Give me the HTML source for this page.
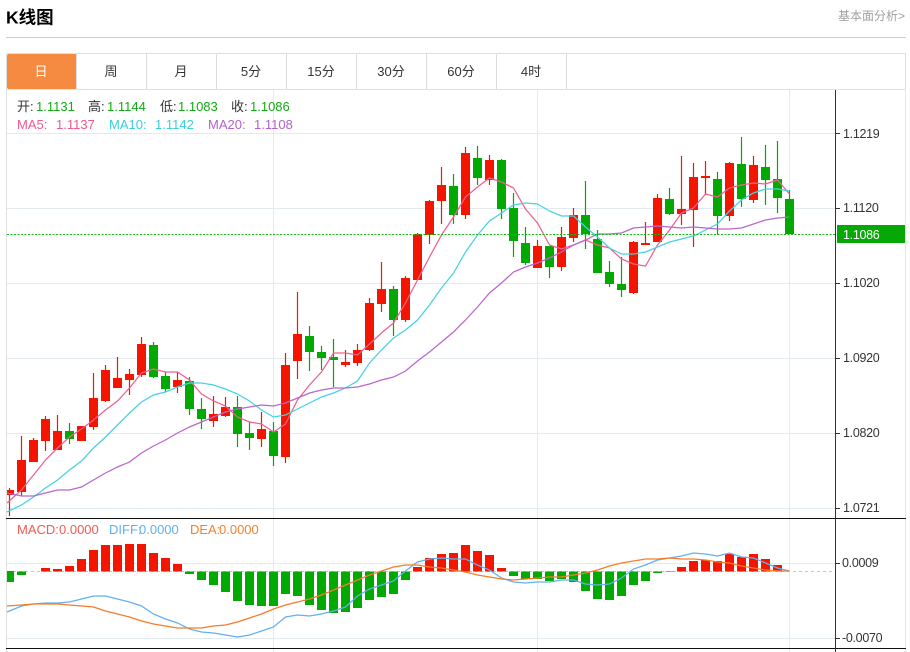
<!DOCTYPE html>
<html lang="zh">
<head>
<meta charset="utf-8">
<title>K线图</title>
<style>
html,body{margin:0;padding:0;background:#fff;}
body{width:910px;height:652px;overflow:hidden;position:relative;font-family:"Liberation Sans","Noto Sans CJK SC",sans-serif;}
svg{position:absolute;left:0;top:0;}
text{font-family:"Liberation Sans","Noto Sans CJK SC",sans-serif;}
</style>
</head>
<body>
<svg width="910" height="652" viewBox="0 0 910 652" xmlns="http://www.w3.org/2000/svg">
<defs><clipPath id="c"><rect x="7" y="90" width="828" height="428"/></clipPath></defs>
<text x="6" y="23.5" font-size="17.5" font-weight="700" fill="#000">K线图</text>
<text x="838" y="20" font-size="12" fill="#a0a0a0">基本面分析&gt;</text>
<rect x="6" y="37" width="900" height="1" fill="#cfcfcf"/>

<!-- frame -->
<path d="M6.5 53.5H905.5V89.5M6.5 53.5V652" fill="none" stroke="#dddfe1"/>
<path d="M905.5 89.5V652" fill="none" stroke="#e3e8ee"/>
<path d="M7 89.5H905" stroke="#dfe3e6"/>
<path d="M76.5 54V89M146.5 54V89M216.5 54V89M286.5 54V89M356.5 54V89M426.5 54V89M496.5 54V89M566.5 54V89" stroke="#dcdcdc"/>
<path d="M9 54H76V89H9Q7 89 7 87V56Q7 54 9 54Z" fill="#f48b40"/>
<g font-size="13" text-anchor="middle" fill="#333">
<text x="41" y="76" fill="#fff">日</text>
<text x="111" y="76">周</text>
<text x="181" y="76">月</text>
<text x="251" y="76">5分</text>
<text x="321" y="76">15分</text>
<text x="391" y="76">30分</text>
<text x="461" y="76">60分</text>
<text x="531" y="76">4时</text>
</g>

<!-- grid -->
<path d="M7 133.5H835M7 208.5H835M7 283.5H835M7 358.5H835M7 433.5H835M7 508.5H835M7 563.5H835M7 638.5H835M273.5 90V652M537.5 90V652M789.5 90V652" stroke="#e3ebf1" fill="none"/>

<!-- candles -->
<g clip-path="url(#c)">
<path stroke="#f41500" stroke-width="1.2" fill="none" d="M9.5 488V516M21.5 436V496M33.5 438V462M45.5 416V451M57.5 415V450M81.5 426V441M93.5 373V430M105.5 365V402M117.5 357V388M129.5 369V395M141.5 337V377M177.5 372V393M213.5 396V427M225.5 397V417M261.5 412V447M285.5 353V463M297.5 292V379M345.5 350V367M357.5 344V366M369.5 298V351M381.5 262V312M405.5 276V322M417.5 233V280M429.5 200V244M441.5 167V224M465.5 147V219M489.5 155V185M537.5 240V268M561.5 227V271M573.5 208V242M633.5 241V294M645.5 222V245M657.5 194V242M681.5 156V225M693.5 163V247M705.5 161V195M729.5 162V221M753.5 156V203"/>
<path stroke="#02a902" stroke-width="1.2" fill="none" d="M69.5 423V444M153.5 342V378M165.5 372V392M189.5 377V415M201.5 398V429M237.5 396V447M249.5 422V450M273.5 422V466M309.5 326V371M321.5 346V370M333.5 339V387M393.5 286V336M453.5 174V224M477.5 146V185M501.5 159V219M513.5 193V257M525.5 227V265M549.5 246V278M585.5 181V249M597.5 230V273M609.5 261V287M621.5 257V297M669.5 188V215M717.5 172V235M741.5 137V207M765.5 145V205M777.5 141V213M789.5 190V234"/>
<path stroke="#f41500" stroke-width="9" fill="none" d="M9.5 490V495M21.5 460V492M33.5 440V462M45.5 419V441M57.5 431V450M81.5 426V441M93.5 398V427M105.5 370V401M117.5 378V388M129.5 374V380M141.5 344V375M177.5 380V387M213.5 414V421M225.5 407V416M261.5 429V439M285.5 365V457M297.5 334V361M345.5 362V365M357.5 350V363M369.5 303V350M381.5 289V304M405.5 278V320M417.5 234V280M429.5 201V235M441.5 185V201M465.5 153V215M489.5 160V180M537.5 246V268M561.5 237V267M573.5 215V238M633.5 242V293M645.5 243V245M657.5 198V242M681.5 209V214M693.5 177V210M705.5 176V178M729.5 163V216M753.5 165V200"/>
<path stroke="#02a902" stroke-width="9" fill="none" d="M69.5 431V439M153.5 345V377M165.5 376V389M189.5 381V409M201.5 409V419M237.5 407V434M249.5 433V438M273.5 431V456M309.5 336V352M321.5 352V358M333.5 357V360M393.5 289V320M453.5 186V215M477.5 158V178M501.5 160V209M513.5 208V241M525.5 243V263M549.5 246V267M585.5 215V234M597.5 239V273M609.5 272V284M621.5 284V290M669.5 199V214M717.5 179V216M741.5 164V199M765.5 167V180M777.5 179V198M789.5 199V234"/>
<polyline fill="none" stroke="#f0608f" stroke-width="1.25" points="7,503 21.5,490 33.5,475 45.5,460 57.5,448 69.5,437 81.5,429 93.5,420 105.5,410 117.5,401 129.5,388 141.5,373 153.5,369 165.5,372 177.5,372 189.5,380 201.5,394 213.5,401 225.5,406 237.5,417 249.5,422 261.5,424 273.5,432 285.5,424 297.5,400 309.5,385 321.5,372 333.5,353 345.5,353 357.5,355 369.5,344 381.5,333 393.5,323 405.5,303 417.5,280 429.5,257 441.5,235 453.5,217 465.5,197 477.5,187 489.5,178 501.5,182 513.5,188 525.5,209 537.5,223 549.5,245 561.5,249 573.5,245 585.5,240 597.5,245 609.5,248 621.5,259 633.5,264 645.5,266 657.5,245 669.5,230 681.5,213 693.5,208 705.5,194 717.5,197 729.5,188 741.5,185 753.5,183 765.5,184 777.5,180 789.5,194"/>
<polyline fill="none" stroke="#45d2e2" stroke-width="1.25" points="7,512 21.5,505 33.5,497 45.5,488 57.5,480 69.5,470 81.5,461 93.5,448 105.5,437 117.5,425 129.5,413 141.5,402 153.5,395 165.5,392 177.5,387 189.5,383 201.5,383 213.5,385 225.5,389 237.5,394 249.5,401 261.5,410 273.5,417 285.5,415 297.5,409 309.5,403 321.5,397 333.5,393 345.5,388 357.5,381 369.5,363 381.5,350 393.5,338 405.5,330 417.5,320 429.5,305 441.5,288 453.5,273 465.5,252 477.5,235 489.5,221 501.5,213 513.5,205 525.5,203 537.5,204 549.5,211 561.5,216 573.5,216 585.5,227 597.5,237 609.5,248 621.5,254 633.5,254 645.5,252 657.5,247 669.5,242 681.5,239 693.5,236 705.5,230 717.5,224 729.5,211 741.5,200 753.5,193 765.5,189 777.5,189 789.5,191"/>
<polyline fill="none" stroke="#b966ce" stroke-width="1.25" points="7,493 21.5,496 33.5,496 45.5,493 57.5,490 69.5,490 81.5,487 93.5,480 105.5,473 117.5,467 129.5,462 141.5,453 153.5,446 165.5,440 177.5,433 189.5,427 201.5,422 213.5,417 225.5,412 237.5,409 249.5,407 261.5,405 273.5,406 285.5,403 297.5,398 309.5,393 321.5,390 333.5,388 345.5,388 357.5,387 369.5,384 381.5,380 393.5,377 405.5,371 417.5,361 429.5,352 441.5,342 453.5,332 465.5,320 477.5,307 489.5,293 501.5,283 513.5,272 525.5,267 537.5,263 549.5,258 561.5,252 573.5,245 585.5,240 597.5,234 609.5,234 621.5,233 633.5,228 645.5,227 657.5,226 669.5,227 681.5,228 693.5,227 705.5,228 717.5,229 729.5,229 741.5,228 753.5,224 765.5,220 777.5,218 789.5,217"/>
</g>
<path d="M7 234.5H835" stroke="#12b812" stroke-width="1" stroke-dasharray="2 1.5"/>

<!-- macd -->
<path d="M7 571.5H833" stroke="#a4d3e4" stroke-dasharray="3 3"/>
<path stroke="#f41500" stroke-width="9" fill="none" d="M45.5 568V571.5M57.5 569V571.5M69.5 566V571.5M81.5 559V571.5M93.5 550V571.5M105.5 545V571.5M117.5 545V571.5M129.5 544V571.5M141.5 544V571.5M153.5 553V571.5M165.5 558V571.5M177.5 564V571.5M417.5 567V571.5M429.5 558V571.5M441.5 554V571.5M453.5 553V571.5M465.5 545V571.5M477.5 551V571.5M489.5 555V571.5M501.5 568V571.5M681.5 567V571.5M693.5 561V571.5M705.5 560V571.5M717.5 561V571.5M729.5 554V571.5M741.5 557V571.5M753.5 554V571.5M765.5 559V571.5M777.5 565V571.5"/>
<path stroke="#02a902" stroke-width="9" fill="none" d="M21.5 571.5V575M189.5 571.5V574M201.5 571.5V580M213.5 571.5V585M225.5 571.5V592M237.5 571.5V601M249.5 571.5V605M261.5 571.5V606M273.5 571.5V606M285.5 571.5V594M297.5 571.5V596M309.5 571.5V605M321.5 571.5V610M333.5 571.5V613M345.5 571.5V612M357.5 571.5V608M369.5 571.5V600M381.5 571.5V597M393.5 571.5V594M405.5 571.5V580M513.5 571.5V576M525.5 571.5V579M537.5 571.5V579M549.5 571.5V581M561.5 571.5V579M573.5 571.5V582M585.5 571.5V591M597.5 571.5V599M609.5 571.5V600M621.5 571.5V596M633.5 571.5V585M645.5 571.5V581M657.5 571.5V573M669.5 571.5V572"/>
<rect x="7" y="571" width="7" height="11" fill="#02a902"/>
<polyline fill="none" stroke="#64aff0" stroke-width="1.25" points="7,612 21.5,606 33.5,604 45.5,603 57.5,603 69.5,602 81.5,599 93.5,596 105.5,596 117.5,599 129.5,602 141.5,606 153.5,614 165.5,619 177.5,623 189.5,629 201.5,632 213.5,633 225.5,635 237.5,637 249.5,635 261.5,631 273.5,627 285.5,617 297.5,615 309.5,616 321.5,614 333.5,611 345.5,607 357.5,596 369.5,589 381.5,585 393.5,581 405.5,571 417.5,562 429.5,559 441.5,558 453.5,559 465.5,559 477.5,565 489.5,570 501.5,578 513.5,582 525.5,583 537.5,582 549.5,582 561.5,580 573.5,580 585.5,584 597.5,585 609.5,584 621.5,578 633.5,569 645.5,565 657.5,560 669.5,558 681.5,556 693.5,553 705.5,554 717.5,556 729.5,553 741.5,557 753.5,558 765.5,563 777.5,568 789.5,571"/>
<polyline fill="none" stroke="#f57d27" stroke-width="1.25" points="7,606 21.5,605 33.5,604 45.5,604 57.5,604 69.5,605 81.5,606 93.5,607 105.5,611 117.5,614 129.5,617 141.5,621 153.5,624 165.5,626 177.5,628 189.5,628 201.5,628 213.5,626 225.5,625 237.5,622 249.5,618 261.5,614 273.5,609 285.5,605 297.5,602 309.5,599 321.5,595 333.5,590 345.5,585 357.5,580 369.5,575 381.5,571 393.5,567 405.5,565 417.5,565 429.5,567 441.5,568 453.5,570 465.5,572 477.5,575 489.5,577 501.5,579 513.5,580 525.5,579 537.5,578 549.5,577 561.5,577 573.5,575 585.5,573 597.5,570 609.5,566 621.5,563 633.5,561 645.5,559 657.5,559 669.5,558 681.5,559 693.5,559 705.5,560 717.5,562 729.5,563 741.5,566 753.5,568 765.5,570 777.5,571 789.5,571"/>

<!-- axis -->
<path d="M6 518.5H906M6 648.5H906" stroke="#111"/>
<path d="M835.5 90V652" stroke="#333"/>
<path d="M835 133.5H840M835 208.5H840M835 283.5H840M835 358.5H840M835 433.5H840M835 508.5H840M835 563.5H840M835 638.5H840" stroke="#333"/>
<rect x="837" y="225" width="68" height="18" fill="#05a805"/>
<g font-size="12.5" fill="#333" letter-spacing="-.3">
<text x="843" y="138">1.1219</text>
<text x="843" y="212">1.1120</text>
<text x="843" y="287">1.1020</text>
<text x="843" y="362">1.0920</text>
<text x="843" y="437">1.0820</text>
<text x="843" y="512">1.0721</text>
<text x="842" y="567">0.0009</text>
<text x="842" y="642">-0.0070</text>
<text x="843" y="239" fill="#fff">1.1086</text>
</g>

<!-- legends -->
<g font-size="13">
<text x="17" y="111" fill="#333">开:</text><text x="36" y="111" fill="#12ab12">1.1131</text>
<text x="88" y="111" fill="#333">高:</text><text x="107" y="111" fill="#12ab12">1.1144</text>
<text x="160" y="111" fill="#333">低:</text><text x="178" y="111" fill="#12ab12">1.1083</text>
<text x="231" y="111" fill="#333">收:</text><text x="250" y="111" fill="#12ab12">1.1086</text>
<text x="17" y="129" fill="#f0588c">MA5:</text><text x="56" y="129" fill="#f0588c">1.1137</text>
<text x="109" y="129" fill="#38cfe0">MA10:</text><text x="155" y="129" fill="#38cfe0">1.1142</text>
<text x="208" y="129" fill="#b760cf">MA20:</text><text x="254" y="129" fill="#b760cf">1.1108</text>
<text x="17" y="534" fill="#f25a50">MACD:</text><text x="59" y="534" fill="#f25a50">0.0000</text>
<text x="109" y="534" fill="#5fb0f0">DIFF:</text><text x="139" y="534" fill="#5fb0f0">0.0000</text>
<text x="190" y="534" fill="#f6802a">DEA:</text><text x="219" y="534" fill="#f6802a">0.0000</text>
</g>
</svg>
</body>
</html>
